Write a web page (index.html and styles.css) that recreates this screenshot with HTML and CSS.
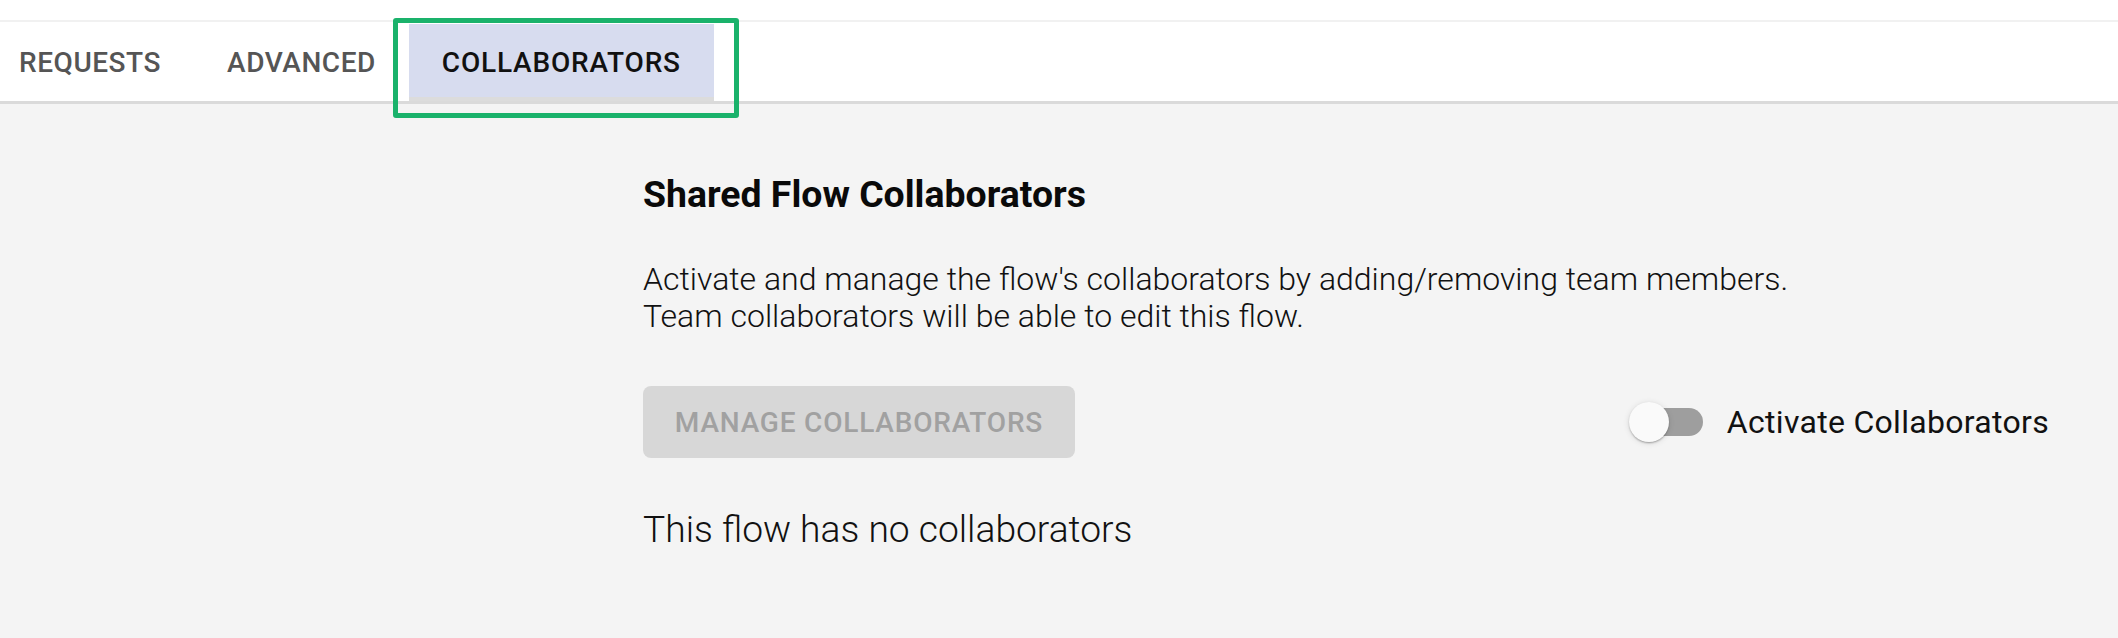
FILE: index.html
```html
<!DOCTYPE html>
<html lang="en">
<head>
<meta charset="utf-8">
<title>Collaborators</title>
<link rel="stylesheet" href="styles.css">
</head>
<body>
<div class="top-strip"></div>
<nav class="tabs">
  <div class="tab-list">
    <div class="tab">Requests</div>
    <div class="tab">Advanced</div>
    <div class="tab tab-selected">Collaborators</div>
  </div>
</nav>
<div class="highlight-box"></div>
<main class="content">
  <h1 class="title">Shared Flow Collaborators</h1>
  <p class="description">Activate and manage the flow's collaborators by adding/removing team members.<br>Team collaborators will be able to edit this flow.</p>
  <div class="action-row">
    <button class="manage-btn" disabled>Manage Collaborators</button>
    <label class="switch-label">
      <span class="switch">
        <span class="switch-track"></span>
        <span class="switch-thumb"></span>
      </span>
      <span class="switch-text">Activate Collaborators</span>
    </label>
  </div>
  <p class="empty">This flow has no collaborators</p>
</main>
</body>
</html>
```
FILE: styles.css
```css
* { box-sizing: border-box; }
html, body {
  margin: 0;
  padding: 0;
}
body {
  background: #f4f4f4;
  font-family: Roboto, "Noto Sans", "Liberation Sans", sans-serif;
  color: #111;
  width: 2118px;
  height: 638px;
  overflow: hidden;
  position: relative;
}
.top-strip {
  height: 22px;
  background: #fff;
  border-bottom: 2px solid #f1f1f1;
}
.tabs {
  background: #fff;
  height: 82px;
  border-bottom: 3px solid #dadada;
  overflow: hidden;
}
.tab-list {
  display: flex;
  height: 79px;
  margin-left: -14px;
}
.tab {
  display: flex;
  align-items: center;
  padding: 4px 33px 0;
  border-top: 2px solid transparent;
  border-bottom: 4px solid transparent;
  font-size: 28px;
  font-weight: 500;
  letter-spacing: 0.55px;
  text-transform: uppercase;
  color: #555;
}
.tab-selected {
  background: #d7dcef;
  background-clip: padding-box;
  border-top-color: #fff;
  border-bottom-color: #dcdcdc;
  color: #111;
  letter-spacing: 0.8px;
}
.highlight-box {
  position: absolute;
  left: 393px;
  top: 18px;
  width: 346px;
  height: 100px;
  border: 5px solid #1ab26b;
  border-radius: 3px;
}
.content {
  padding-left: 643px;
  padding-top: 68px;
  width: 2049px;
}
.title {
  margin: 0;
  font-size: 37.4px;
  line-height: 44px;
  font-weight: 700;
  color: #0a0a0a;
}
.description {
  margin: 45px 0 0;
  font-size: 32px;
  line-height: 37px;
  font-weight: 300;
  color: #111;
}
.action-row {
  margin-top: 51px;
  display: flex;
  align-items: center;
  justify-content: space-between;
}
.manage-btn {
  height: 72px;
  width: 432px;
  border: none;
  border-radius: 8px;
  background: #d7d7d7;
  color: #a1a1a1;
  font-family: Roboto, "Liberation Sans", sans-serif;
  font-size: 28px;
  font-weight: 500;
  letter-spacing: 0.8px;
  text-transform: uppercase;
  padding: 0;
}
.switch-label {
  display: flex;
  align-items: center;
  gap: 24px;
}
.switch {
  position: relative;
  width: 74px;
  height: 40px;
  flex: none;
}
.switch-track {
  position: absolute;
  left: 6px;
  top: 6px;
  width: 68px;
  height: 28px;
  border-radius: 14px;
  background: #9e9e9e;
}
.switch-thumb {
  position: absolute;
  left: 0;
  top: 0;
  width: 40px;
  height: 40px;
  border-radius: 50%;
  background: #fafafa;
  box-shadow: 0 2px 2px -1px rgba(0,0,0,0.2), 0 1px 2px rgba(0,0,0,0.14), 0 1px 6px rgba(0,0,0,0.12);
}
.switch-text {
  font-size: 32px;
  line-height: 40px;
  font-weight: 400;
  letter-spacing: 0.3px;
  color: #111;
}
.empty {
  margin: 49px 0 0;
  font-size: 37.2px;
  line-height: 44px;
  font-weight: 300;
  color: #111;
}
```
